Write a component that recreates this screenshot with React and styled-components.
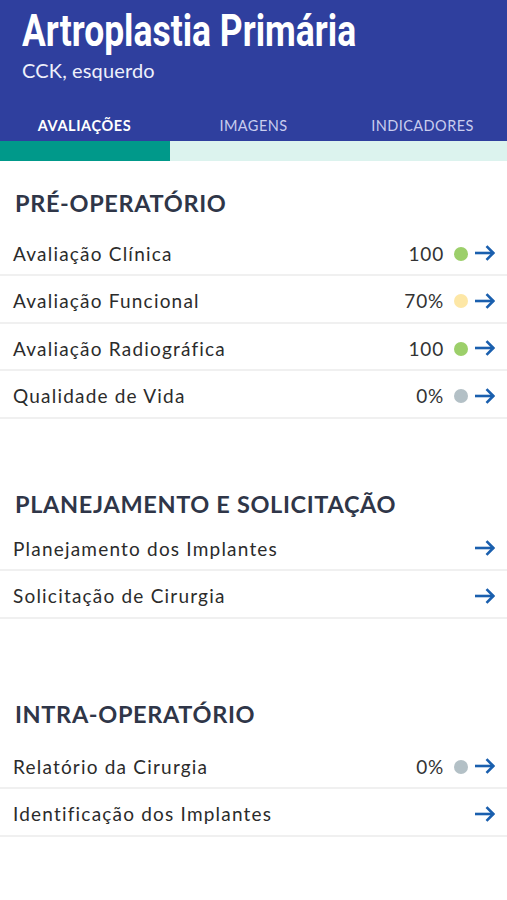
import React from "react";
import styled, { createGlobalStyle } from "styled-components";

const Global = createGlobalStyle`
  html, body { margin: 0; padding: 0; background: #ffffff; }
  body { font-family: Lato, "Noto Sans", sans-serif; -webkit-font-smoothing: antialiased; }
`;

const Page = styled.div`
  width: 507px;
  min-height: 900px;
  background: #fff;
`;

const Header = styled.header`
  background: #2f3f9e;
  color: #fff;
`;

const TitleBlock = styled.div`
  padding: 8px 22px 0;
  height: 101px;
  box-sizing: border-box;
`;

const Title = styled.h1`
  margin: 0;
  display: inline-block;
  white-space: nowrap;
  font-family: Roboto, "Noto Sans", sans-serif;
  font-weight: 700;
  font-size: 44px;
  line-height: 46px;
  letter-spacing: 0;
  transform: scaleX(0.806);
  transform-origin: left center;
`;

const Subtitle = styled.div`
  font-family: Lato, "Noto Sans", sans-serif;
  font-size: 20px;
  line-height: 26px;
  letter-spacing: 0.15px;
  color: #eef0fb;
  margin-top: 3px;
`;

const Tabs = styled.nav`
  display: grid;
  grid-template-columns: repeat(3, 1fr);
  height: 40px;
`;

const Tab = styled.div`
  display: flex;
  align-items: center;
  justify-content: center;
  padding-top: 8px;
  font-family: Lato, "Noto Sans", sans-serif;
  font-size: 14.5px;
  letter-spacing: ${(p) => (p.$active ? "0.6px" : "0.45px")};
  font-weight: ${(p) => (p.$active ? 700 : 400)};
  color: ${(p) => (p.$active ? "#ffffff" : "#c9cdee")};
`;

const Indicator = styled.div`
  display: grid;
  grid-template-columns: 170px 1fr;
  height: 20px;
  background: #dcf3ee;
`;

const IndicatorBar = styled.div`
  background: #00998a;
`;

const Section = styled.section`
  padding-top: ${(p) => p.$top}px;
`;

const SectionTitle = styled.h2`
  margin: 0 0 ${(p) => p.$after}px;
  height: 40px;
  display: flex;
  align-items: center;
  padding: 0 15px;
  font-family: Lato, "Noto Sans", sans-serif;
  font-weight: 700;
  font-size: 23.5px;
  letter-spacing: 0.65px;
  color: #2f3648;
`;

const Row = styled.div`
  height: 47.5px;
  box-sizing: border-box;
  padding: 4px 12px 0 13px;
  border-bottom: 2px solid #f0f0f0;
  display: flex;
  align-items: center;
`;

const Label = styled.span`
  flex: 1;
  font-family: Lato, "Noto Sans", sans-serif;
  font-size: 19px;
  letter-spacing: 1.2px;
  color: #2b2b2b;
`;

const Value = styled.span`
  font-family: Lato, "Noto Sans", sans-serif;
  font-size: 19px;
  letter-spacing: 0.8px;
  color: #333;
  margin-right: 10px;
`;

const Dot = styled.span`
  width: 14px;
  height: 14px;
  border-radius: 50%;
  background: ${(p) => p.$color};
  margin-right: 6px;
  margin-top: 1px;
`;

const ArrowWrap = styled.span`
  display: flex;
  width: 21px;
  height: 18px;
`;

const Arrow = () => (
  <ArrowWrap>
    <svg width="21" height="18" viewBox="0 0 21 18" fill="none">
      <path d="M1 9H19.2" stroke="#1a5fae" strokeWidth="2.6" strokeLinecap="butt" />
      <path d="M12.5 2.2L19.3 9L12.5 15.8" stroke="#1a5fae" strokeWidth="2.6" strokeLinecap="butt" strokeLinejoin="miter" />
    </svg>
  </ArrowWrap>
);

const DOT = { green: "#9ccf6a", yellow: "#fde7a6", gray: "#b3c0c6" };

const sections = [
  {
    title: "PRÉ-OPERATÓRIO",
    top: 21.5,
    after: 6,
    rows: [
      { label: "Avaliação Clínica", value: "100", dot: "green" },
      { label: "Avaliação Funcional", value: "70%", dot: "yellow" },
      { label: "Avaliação Radiográfica", value: "100", dot: "green" },
      { label: "Qualidade de Vida", value: "0%", dot: "gray" },
    ],
  },
  {
    title: "PLANEJAMENTO E SOLICITAÇÃO",
    top: 65,
    after: 0,
    rows: [
      { label: "Planejamento dos Implantes" },
      { label: "Solicitação de Cirurgia" },
    ],
  },
  {
    title: "INTRA-OPERATÓRIO",
    top: 75.5,
    after: 7.5,
    rows: [
      { label: "Relatório da Cirurgia", value: "0%", dot: "gray" },
      { label: "Identificação dos Implantes" },
    ],
  },
];

export default function App() {
  return (
    <Page>
      <Global />
      <Header>
        <TitleBlock>
          <Title>Artroplastia Primária</Title>
          <Subtitle>CCK, esquerdo</Subtitle>
        </TitleBlock>
        <Tabs>
          <Tab $active>AVALIAÇÕES</Tab>
          <Tab>IMAGENS</Tab>
          <Tab>INDICADORES</Tab>
        </Tabs>
      </Header>
      <Indicator>
        <IndicatorBar />
      </Indicator>
      {sections.map((s) => (
        <Section key={s.title} $top={s.top}>
          <SectionTitle $after={s.after}>{s.title}</SectionTitle>
          {s.rows.map((r) => (
            <Row key={r.label}>
              <Label>{r.label}</Label>
              {r.value && <Value>{r.value}</Value>}
              {r.dot && <Dot $color={DOT[r.dot]} />}
              <Arrow />
            </Row>
          ))}
        </Section>
      ))}
    </Page>
  );
}
